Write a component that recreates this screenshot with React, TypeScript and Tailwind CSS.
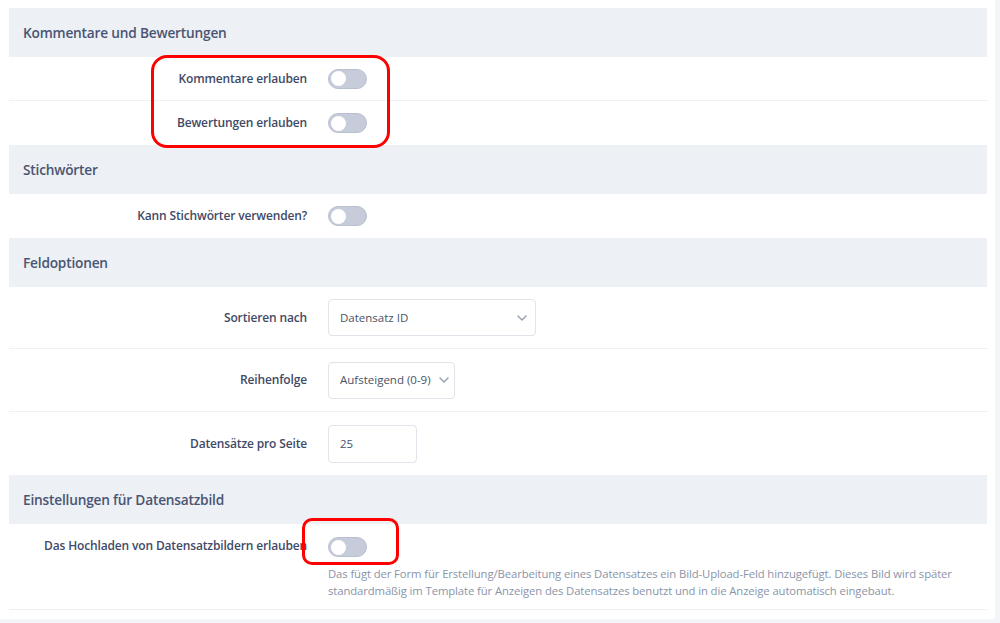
import React from 'react';

const font = { fontFamily: '"Open Sans", "Noto Sans", sans-serif' };

const Toggle = () => (
  <div className="relative h-[20px] w-[39px] rounded-full border border-[#b8bfce] bg-[#c6ccda]">
    <div className="absolute left-[2px] top-[1.5px] h-[15px] w-[15px] rounded-full bg-white" />
  </div>
);

const Chevron = () => (
  <svg width="10" height="6" viewBox="0 0 10 6" fill="none" className="shrink-0">
    <path d="M1 1l4 4 4-4" stroke="#9aa1af" strokeWidth="1.5" strokeLinecap="round" strokeLinejoin="round" />
  </svg>
);

const SectionHeader = ({ title }: { title: string }) => (
  <div className="flex h-[49px] items-center bg-[#edf0f5] px-[14px] pt-[2px] text-[13.7px] font-semibold tracking-[-0.2px] text-[#4a5573]">
    {title}
  </div>
);

const Row = ({
  label,
  children,
  height = 'h-[44px]',
  border = true,
}: {
  label: string;
  children: React.ReactNode;
  height?: string;
  border?: boolean;
}) => (
  <div className={`flex items-center ${height} ${border ? 'border-b border-[#eef0f3]' : ''}`}>
    <div className="w-[298px] text-right text-[12px] font-semibold tracking-[-0.15px] text-[#3f4a66]">{label}</div>
    <div className="ml-[21px]">{children}</div>
  </div>
);

const Select = ({ value, width }: { value: string; width: string }) => (
  <div
    className={`flex h-[37px] ${width} items-center justify-between gap-[8px] whitespace-nowrap rounded-[4px] border border-[#dfe3ea] bg-white pl-[11px] pr-[8px] text-[11.5px] text-[#4a5266]`}
  >
    <span>{value}</span>
    <Chevron />
  </div>
);

export default function App() {
  return (
    <div className="min-h-screen bg-[#f3f5f8]" style={font}>
      <div className="relative h-[619px] w-[995px] bg-white pl-[9px] pt-[8px]">
        <div className="w-[978px]">
          <SectionHeader title="Kommentare und Bewertungen" />
          <Row label="Kommentare erlauben">
            <Toggle />
          </Row>
          <Row label="Bewertungen erlauben" border={false}>
            <Toggle />
          </Row>

          <SectionHeader title="Stichwörter" />
          <Row label="Kann Stichwörter verwenden?" border={false}>
            <Toggle />
          </Row>

          <SectionHeader title="Feldoptionen" />
          <Row label="Sortieren nach" height="h-[62px]">
            <Select value="Datensatz ID" width="w-[208px]" />
          </Row>
          <Row label="Reihenfolge" height="h-[63px]">
            <Select value="Aufsteigend (0-9)" width="w-[127px]" />
          </Row>
          <Row label="Datensätze pro Seite" height="h-[63px]" border={false}>
            <div className="flex h-[38px] w-[89px] items-center rounded-[4px] border border-[#dfe3ea] bg-white pl-[11px] text-[11.5px] text-[#4a5266]">
              25
            </div>
          </Row>

          <SectionHeader title="Einstellungen für Datensatzbild" />
          <div className="flex h-[86px] items-start border-b border-[#eef0f3] pt-[12px]">
            <div className="w-[298px] pt-[1px] text-right text-[12px] font-semibold leading-[18px] tracking-[-0.15px] text-[#3f4a66]">
              Das Hochladen von Datensatzbildern erlauben
            </div>
            <div className="ml-[21px]">
              <div className="pt-[1px]">
                <Toggle />
              </div>
              <p className="mt-[8px] whitespace-nowrap text-[11.3px] leading-[17px] tracking-[-0.1px] text-[#8a94a8]">
                Das fügt der Form für Erstellung/Bearbeitung eines Datensatzes ein Bild-Upload-Feld hinzugefügt. Dieses Bild wird später
                <br />
                standardmäßig im Template für Anzeigen des Datensatzes benutzt und in die Anzeige automatisch eingebaut.
              </p>
            </div>
          </div>
        </div>

        {/* annotation boxes */}
        <div className="absolute left-[151px] top-[55px] h-[93px] w-[239px] rounded-[16px] border-[3.5px] border-[#ff0000]" />
        <div className="absolute left-[302px] top-[518px] h-[47px] w-[97px] rounded-[10px] border-[3.5px] border-[#ff0000]" />
      </div>
    </div>
  );
}
